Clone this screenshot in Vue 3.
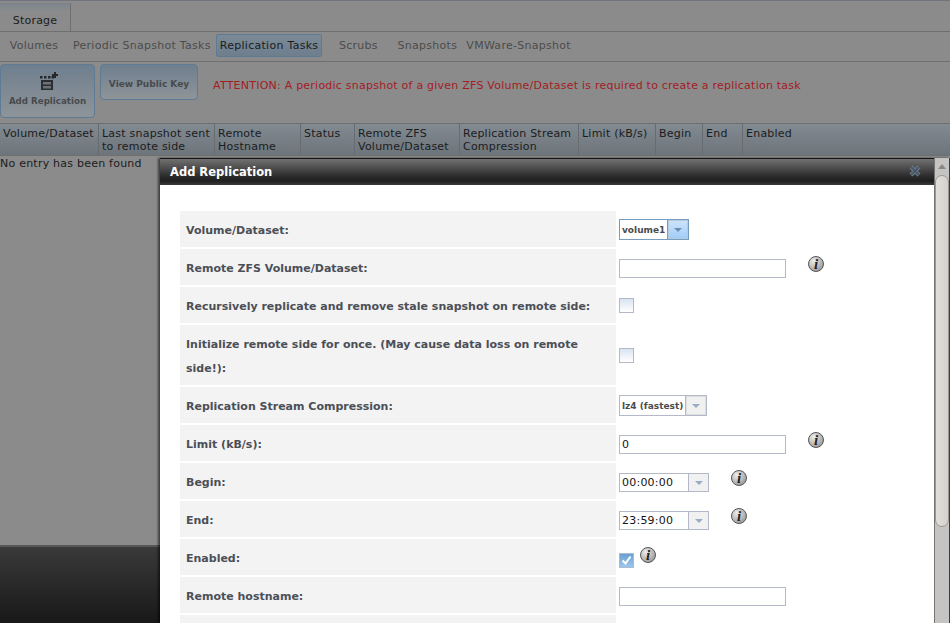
<template>
  <div class="page">
    <div class="tabbar">
      <div class="tab">Storage</div>
    </div>
    <div class="subnav">
      <span
        v-for="item in navItems"
        :key="item"
        :class="['nav-item', { active: item === 'Replication Tasks' }]"
      >{{ item }}</span>
    </div>
    <div class="toolbar">
      <button class="tool-btn big">
        <svg class="add-icon" width="19" height="19" viewBox="0 0 19 19">
          <path d="M0 5h2.500v2.500H0zM4 5h2.500v2.500H4zM8 5h2.500v2.500H8zM11.500 5H14v2.500h-2.500z" fill="#26292c" />
          <path d="M14 1h2v2h2v2h-2v2h-2V5h-2V3h2z" fill="#26292c" />
          <path d="M1 9h12v10H1z" fill="#2b2e31" />
          <path d="M3 11h8v2.500H3zM3 15h8v2.500H3z" fill="#6e7276" />
        </svg>
        <span class="btn-label">Add Replication</span>
      </button>
      <button class="tool-btn key">View Public Key</button>
      <p class="notice">ATTENTION: A periodic snapshot of a given ZFS Volume/Dataset is required to create a replication task</p>
    </div>
    <div class="grid-head">
      <div v-for="col in columns" :key="col" class="head-cell">{{ col }}</div>
    </div>
    <div class="grid-body">No entry has been found</div>
    <div class="footer"></div>

    <div class="dialog">
      <div class="dialog-pane">
        <div class="dialog-title">
          <span>Add Replication</span>
          <svg class="close" width="12" height="12" viewBox="0 0 12 12">
            <path d="M2 2l8 8M10 2l-8 8" stroke="#6f7a84" stroke-width="4" />
            <path d="M2 2l8 8M10 2l-8 8" stroke="#46586a" stroke-width="2" />
          </svg>
        </div>
        <div class="dialog-body">
          <table class="form">
            <tbody>
              <tr v-for="row in rows" :key="row.label">
                <th>{{ row.label }}</th>
                <td>
                  <div class="field">
                    <div v-if="row.kind === 'select'" :class="['select', { focused: row.focused }]" :style="{ width: row.width + 'px' }">
                      <span class="select-text">{{ row.value }}</span>
                      <span class="select-arrow"><i></i></span>
                    </div>
                    <div v-else-if="row.kind === 'time'" class="time">
                      <span class="time-text">{{ row.value }}</span>
                      <span class="time-arrow"><i></i></span>
                    </div>
                    <div v-else-if="row.kind === 'check'" :class="['check', { on: row.checked }]">
                      <svg v-if="row.checked" width="13" height="13" viewBox="0 0 13 13">
                        <path d="M2.500 6.500l3 3 5-7" fill="none" stroke="#fff" stroke-width="2" />
                      </svg>
                    </div>
                    <div v-else-if="row.kind === 'text'" class="input">{{ row.value }}</div>
                    <span v-if="row.info" class="info" :class="{ near: row.kind === 'check' }">i</span>
                  </div>
                </td>
              </tr>
            </tbody>
          </table>
        </div>
      </div>
      <div class="scrollbar">
        <i class="scroll-up"></i>
        <div class="scroll-thumb"></div>
      </div>
    </div>
  </div>
</template>

<script setup>
const navItems = ['Volumes', 'Periodic Snapshot Tasks', 'Replication Tasks', 'Scrubs', 'Snapshots', 'VMWare-Snapshot']

const columns = [
  'Volume/Dataset',
  'Last snapshot sent to remote side',
  'Remote Hostname',
  'Status',
  'Remote ZFS Volume/Dataset',
  'Replication Stream Compression',
  'Limit (kB/s)',
  'Begin',
  'End',
  'Enabled'
]

const rows = [
  { label: 'Volume/Dataset:', kind: 'select', value: 'volume1', width: 70, focused: true },
  { label: 'Remote ZFS Volume/Dataset:', kind: 'text', value: '', info: true },
  { label: 'Recursively replicate and remove stale snapshot on remote side:', kind: 'check' },
  { label: 'Initialize remote side for once. (May cause data loss on remote side!):', kind: 'check' },
  { label: 'Replication Stream Compression:', kind: 'select', value: 'lz4 (fastest)', width: 88 },
  { label: 'Limit (kB/s):', kind: 'text', value: '0', info: true },
  { label: 'Begin:', kind: 'time', value: '00:00:00', info: true },
  { label: 'End:', kind: 'time', value: '23:59:00', info: true },
  { label: 'Enabled:', kind: 'check', checked: true, info: true },
  { label: 'Remote hostname:', kind: 'text', value: '' },
  { label: '', kind: 'none' }
]
</script>

<style scoped>
.page {
  position: relative;
  width: 950px;
  height: 623px;
  overflow: hidden;
  display: flex;
  flex-direction: column;
  background: #8b8b8b;
  font-family: "DejaVu Sans", sans-serif;
  font-size: 11px;
  letter-spacing: 0.23px;
  color: #1b1c1d;
}

.tabbar {
  height: 32px;
  box-sizing: border-box;
  padding-top: 3px;
  border-top: 1px solid #70747e;
  border-bottom: 1px solid #6f6f6f;
  flex: none;
}

.tab {
  width: 71px;
  height: 28px;
  box-sizing: border-box;
  padding-top: 10px;
  margin-top: -1px;
  text-align: center;
  line-height: 14px;
  border-top: 1px solid #7c8288;
  border-right: 1px solid #6f6f6f;
  background: linear-gradient(#7f878e, #8b8b8b 30%);
}

.subnav {
  height: 30px;
  box-sizing: border-box;
  padding-top: 2px;
  display: flex;
  align-items: flex-start;
  gap: 1px;
  border-bottom: 1px solid #6f6f6f;
  letter-spacing: 0.28px;
  flex: none;
}

.nav-item {
  min-width: 68px;
  box-sizing: border-box;
  height: 23px;
  line-height: 22px;
  padding: 0 3px;
  border: 1px solid transparent;
  border-radius: 2px;
  text-align: center;
  color: #4b4b4b;
}

.nav-item.active {
  margin-right: 1px;
  border-color: #5d7b94;
  background: linear-gradient(#7c8a97, #6e7e8d);
  color: #1a1d20;
}

.toolbar {
  height: 61px;
  box-sizing: border-box;
  padding: 2px 0 0;
  display: flex;
  align-items: flex-start;
  gap: 5px;
  flex: none;
}

.tool-btn {
  width: 98px;
  height: 36px;
  padding: 0;
  border: 1px solid #5d7b94;
  border-radius: 4px;
  background: linear-gradient(#6f7f8e, #8e9499);
  font-family: inherit;
  font-size: 9px;
  font-weight: bold;
  letter-spacing: 0;
  color: #484a4c;
}

.tool-btn.key {
  padding-top: 3px;
}

.tool-btn.big {
  width: 95px;
  height: 54px;
  display: flex;
  flex-direction: column;
  align-items: center;
  justify-content: flex-start;
  gap: 6px;
  padding-top: 6px;
  box-sizing: border-box;
}

.btn-label {
  font-size: 8.700px;
  line-height: 11px;
}

.add-icon {
  margin-left: 3px;
}

.notice {
  margin: 15px 0 0 10px;
  color: #a41c24;
  white-space: nowrap;
}

.grid-head {
  height: 33px;
  box-sizing: border-box;
  display: grid;
  grid-template-columns: 99px 116px 86px 54px 105px 119px 77px 47px 40px 1fr;
  border-top: 1px solid #6f6f6f;
  border-bottom: 1px solid #6f6f6f;
  background: linear-gradient(#828a92, #6d747a);
  flex: none;
}

.head-cell {
  padding: 3px 3px 0;
  border-right: 1px solid #666c72;
  line-height: 13px;
}

.head-cell:last-child {
  border-right: 0;
}

.grid-body {
  flex: 1;
  line-height: 16px;
}

.footer {
  height: 78px;
  box-sizing: border-box;
  border-top: 2px solid #565656;
  background: linear-gradient(#3a3a3a, #181818);
  flex: none;
}

.dialog {
  position: absolute;
  left: 160px;
  top: 158px;
  right: 0;
  bottom: 0;
  display: flex;
  box-shadow: -2px 0 2px rgba(0, 0, 0, 0.55);
}

.dialog-pane {
  flex: 1;
  min-width: 0;
  background: #fff;
}

.dialog-title {
  height: 27px;
  box-sizing: border-box;
  padding: 0 13px 0 10px;
  display: flex;
  align-items: center;
  justify-content: space-between;
  border-top: 1px solid #141414;
  background: linear-gradient(#717171, #2a2a2a 68%, #1f1f1f 85%, #3a3a3a);
  color: #fff;
  font-size: 11.500px;
  font-weight: bold;
  letter-spacing: 0;
}

.close {
  margin-bottom: 2px;
}

.dialog-body {
  padding: 24px 0 0 18px;
}

.form {
  border-collapse: separate;
  border-spacing: 2px;
}

.form th {
  width: 424px;
  padding: 8px 6px 4px;
  line-height: 24px;
  background: #f3f3f3;
  color: #4b4f57;
  text-align: left;
  font-weight: bold;
  letter-spacing: 0;
}

.form td {
  padding: 0 0 0 1px;
  line-height: 24px;
}

.field {
  display: flex;
  align-items: center;
}

.input {
  width: 167px;
  height: 19px;
  margin-top: 3px;
  padding-left: 2px;
  box-sizing: border-box;
  border: 1px solid #b3b9c9;
  line-height: 17px;
  color: #141414;
}

.select {
  height: 21px;
  box-sizing: border-box;
  display: flex;
  border: 1px solid #b3b9c9;
  margin-top: 1px;
}

.select-text {
  flex: 1;
  min-width: 0;
  padding: 1px 0 0 2px;
  font-size: 9px;
  font-weight: bold;
  letter-spacing: 0;
  line-height: 19px;
  color: #4b4b4b;
  white-space: nowrap;
}

.select-arrow {
  width: 20px;
  flex: none;
  display: flex;
  align-items: center;
  justify-content: center;
  border-left: 1px solid #b3b9c9;
  box-shadow: inset 0 0 0 1px #dedede;
  background: #f0f0f0;
}

.select-arrow i,
.time-arrow i {
  border-left: 4px solid transparent;
  border-right: 4px solid transparent;
  border-top: 4px solid #9aabc6;
}

.select.focused {
  border-color: #769dc0;
}

.select.focused .select-arrow {
  border-left-color: #769dc0;
  box-shadow: inset 0 0 0 1px #b4cbe0;
  background: linear-gradient(#cfe4fa, #9fcbf8);
}

.select.focused .select-arrow i {
  border-top-color: #6c8db5;
}

.time {
  width: 90px;
  height: 19px;
  box-sizing: border-box;
  display: flex;
  border: 1px solid #b3b9c9;
  margin-top: 3px;
}

.time-text {
  flex: 1;
  padding-left: 2px;
  line-height: 17px;
  color: #141414;
}

.time-arrow {
  width: 19px;
  display: flex;
  align-items: center;
  justify-content: center;
  border-left: 1px solid #b3b9c9;
  background: #f1f1f1;
}

.check {
  width: 15px;
  height: 15px;
  box-sizing: border-box;
  border: 1px solid #b3b9c9;
  background: linear-gradient(#d9e4f0, #fff);
  margin-top: 1px;
}

.check.on {
  border-color: #a9bbd0;
  background: linear-gradient(#6a9fd2, #9cc6ea);
  margin-top: 6px;
}

.check svg {
  display: block;
}

.info {
  width: 16px;
  height: 16px;
  margin: 0 0 7px 22px;
  border-radius: 50%;
  box-sizing: border-box;
  border: 1px solid #555;
  background: radial-gradient(circle at 35% 30%, #eee, #9d9d9d 78%);
  font-family: "Liberation Serif", serif;
  font-size: 15px;
  font-style: italic;
  font-weight: bold;
  letter-spacing: 0;
  line-height: 14px;
  text-align: center;
  color: #222;
}

.info.near {
  margin-left: 6px;
  margin-bottom: 5px;
}

.scrollbar {
  position: relative;
  width: 16px;
  box-sizing: border-box;
  flex: none;
  border-left: 1px solid #77736f;
  border-right: 1px solid #3c3c3c;
  background: #c6c4c2;
}

.scroll-up {
  position: absolute;
  left: 3px;
  top: 6px;
  border-left: 4px solid transparent;
  border-right: 4px solid transparent;
  border-bottom: 5px solid #8a8682;
}

.scroll-thumb {
  position: absolute;
  left: 0;
  right: 0;
  top: 17px;
  height: 352px;
  box-sizing: border-box;
  border: 1px solid #9c9894;
  border-radius: 7px;
  background: linear-gradient(90deg, #e2dfdb, #d4d0cc);
}
</style>
